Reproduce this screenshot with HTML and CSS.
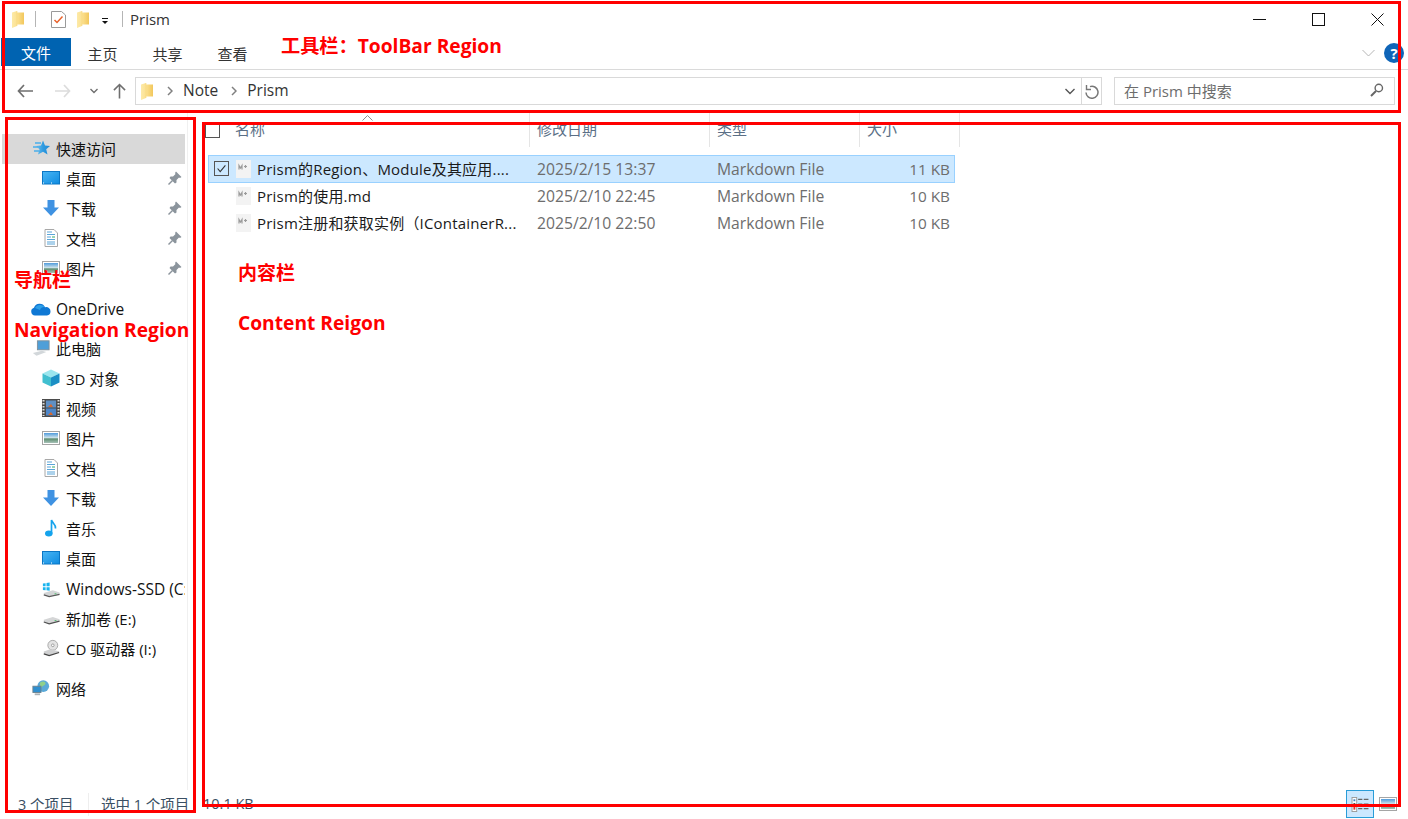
FILE: index.html
```html
<!DOCTYPE html>
<html lang="zh-CN">
<head>
<meta charset="utf-8">
<title>Prism</title>
<link rel="stylesheet" href="styles.css">
</head>
<body>
<svg class="defs" width="0" height="0" aria-hidden="true">
  <defs>
    <linearGradient id="gf" x1="0" y1="0" x2="1" y2="0"><stop offset="0" stop-color="#fdeaa8"/><stop offset=".45" stop-color="#fbe08f"/><stop offset="1" stop-color="#f2c75c"/></linearGradient>
    <linearGradient id="gd" x1="0" y1="0" x2="1" y2="1"><stop offset="0" stop-color="#49b6f5"/><stop offset="1" stop-color="#0f8be0"/></linearGradient>
    <linearGradient id="gp" x1="0" y1="0" x2="0" y2="1"><stop offset="0" stop-color="#4f9bdc"/><stop offset=".45" stop-color="#c8dfe9"/><stop offset=".6" stop-color="#5f8f72"/><stop offset="1" stop-color="#a8c2b8"/></linearGradient>
    <linearGradient id="gs" x1="0" y1="0" x2="1" y2="0"><stop offset="0" stop-color="#6cc0f0"/><stop offset=".5" stop-color="#2f9be0"/><stop offset="1" stop-color="#1f8ad6"/></linearGradient>
    <symbol id="i-folder" viewBox="0 0 12 17"><path d="M0 1.500 5 0V1.500H12V13.500H5V15L0 17Z" fill="url(#gf)"/><path d="M5 0V15" stroke="#f7d67c" stroke-width=".6"/></symbol>
    <symbol id="i-desktop" viewBox="0 0 18 14"><rect x=".5" y=".5" width="17" height="12.500" fill="url(#gd)" stroke="#0b76c4"/><path d="M1 12h16" stroke="#fff" stroke-dasharray="1 7"/></symbol>
    <symbol id="i-down" viewBox="0 0 18 18"><path d="M5.500 1h7v7.500H17L9 17 1 8.500h4.500Z" fill="#3f92e2"/></symbol>
    <symbol id="i-doc" viewBox="0 0 18 18"><path d="M3 .5h9L15.500 4v13.500H3Z" fill="#fff" stroke="#a8a8a8"/><path d="M5 3h5M5 5.500h8M5 8h4M5 10.500h8M5 13h8M5 15h8" stroke="#5aa5d8"/><path d="M10 8h3" stroke="#3a6"/></symbol>
    <symbol id="i-pic" viewBox="0 0 18 14"><rect x=".5" y=".5" width="17" height="13" fill="#fff" stroke="#a5a5a5"/><rect x="2" y="2" width="14" height="10" fill="url(#gp)"/></symbol>
    <symbol id="i-pin" viewBox="0 0 14 14"><path d="M8 .5 13.500 6 12 7 11 6.500 8.500 9 8.500 11.500 7 12.500 1.500 7 2.500 5.500 5 5.500 7.500 3 7 2Z" fill="#8b949c"/><path d="M4.500 9.500 .5 13.500" stroke="#8b949c" stroke-width="1.400"/></symbol>
    <symbol id="i-md" viewBox="0 0 15 18"><rect x="0" y="0" width="15" height="18" fill="#f3f3f3"/><path d="M3 9.500V5.500l1.500 2.500L6 5.500v4M8 6.500h3M9.500 5v3" fill="none" stroke="#9b9b9b" stroke-width="1.200"/></symbol>
    <symbol id="i-check" viewBox="0 0 15 15"><path d="M3 7.500 6 11 12 4" fill="none" stroke="#333" stroke-width="1.300"/></symbol>
    <symbol id="i-crumb" viewBox="0 0 6 10"><path d="M1 1 5 5 1 9" fill="none" stroke="#808080" stroke-width="1.500"/></symbol>
  </defs>
</svg>

<div class="window">
  <header class="toolbar">
    <div class="titlebar">
      <svg class="q-folder"><use href="#i-folder"/></svg>
      <span class="q-sep"></span>
      <svg class="q-props" viewBox="0 0 15 17"><path d="M.5.500h10L14.500 4v12.500H.5Z" fill="#fff" stroke="#9a9a9a"/><path d="M3.500 9 6 11.500 11.500 5.500" fill="none" stroke="#e8622c" stroke-width="1.500"/></svg>
      <svg class="q-folder q-folder2"><use href="#i-folder"/></svg>
      <svg class="q-drop" viewBox="0 0 8 8"><path d="M1 1.500h6" stroke="#111"/><path d="M1 4h6L4 7Z" fill="#111"/></svg>
      <span class="q-sep q-sep2"></span>
      <span class="title-text">Prism</span>
      <div class="win-btns">
        <button class="win-btn"><svg viewBox="0 0 13 13"><path d="M0 6.500h13" stroke="#111"/></svg></button>
        <button class="win-btn"><svg viewBox="0 0 13 13"><rect x=".5" y=".5" width="12" height="12" fill="none" stroke="#111"/></svg></button>
        <button class="win-btn"><svg viewBox="0 0 13 13"><path d="M.5.500l12 12M12.500.500l-12 12" stroke="#111"/></svg></button>
      </div>
    </div>
    <div class="ribbon">
      <span class="tab tab-file">文件</span>
      <span class="tab">主页</span>
      <span class="tab">共享</span>
      <span class="tab">查看</span>
      <svg class="rib-chev" viewBox="0 0 13 8"><path d="M.5 1 6.500 7 12.500 1" fill="none" stroke="#b5b5b5"/></svg>
      <span class="help">?</span>
    </div>
    <div class="addr-row">
      <div class="nav-arrows">
        <svg class="ar-back" viewBox="0 0 16 14"><path d="M7 1 1.500 7 7 13M1.500 7H16" fill="none" stroke="#6f6f6f" stroke-width="1.700"/></svg>
        <svg class="ar-fwd" viewBox="0 0 16 14"><path d="M9 1 14.500 7 9 13M14.500 7H0" fill="none" stroke="#dcdcdc" stroke-width="1.700"/></svg>
        <svg class="ar-rec" viewBox="0 0 8 6"><path d="M.5 1 4 4.500 7.500 1" fill="none" stroke="#6f6f6f" stroke-width="1.400"/></svg>
        <svg class="ar-up" viewBox="0 0 14 16"><path d="M1 7 7 1 13 7M7 1V16" fill="none" stroke="#6f6f6f" stroke-width="1.700"/></svg>
      </div>
      <div class="addr">
        <svg class="addr-folder"><use href="#i-folder"/></svg>
        <svg class="crumb-sep"><use href="#i-crumb"/></svg>
        <span class="crumb crumb-note">Note</span>
        <svg class="crumb-sep crumb-sep2"><use href="#i-crumb"/></svg>
        <span class="crumb">Prism</span>
        <svg class="addr-chev" viewBox="0 0 10 7"><path d="M.5 1 5 5.500 9.500 1" fill="none" stroke="#555" stroke-width="1.400"/></svg>
        <span class="addr-refresh"><svg viewBox="0 0 14 15"><path d="M5 2.600A6 6 0 1 1 1 8.500" fill="none" stroke="#777" stroke-width="1.500"/><path d="M1.500 1V5.500H6" fill="none" stroke="#777" stroke-width="1.400"/></svg></span>
      </div>
      <div class="search">
        <span>在 Prism 中搜索</span>
        <svg viewBox="0 0 14 14"><circle cx="8.800" cy="5" r="3.700" fill="none" stroke="#666" stroke-width="1.400"/><path d="M6 8 1 13" stroke="#666" stroke-width="2"/></svg>
      </div>
    </div>
  </header>

  <div class="main">
    <nav class="nav">
      <div class="nav-row l1 active">
        <svg class="ni" viewBox="0 0 18 16"><path d="M11 .5 13 5.500 18 6 14.200 9.300 15.500 14.500 11 11.800 6 14.500 7.500 9.300 4 6 9 5.500Z" fill="url(#gs)"/><path d="M3 3h6M1 7h5M2 11h5" stroke="#4aaeea" stroke-width="1.300"/></svg>
        <span>快速访问</span>
      </div>
      <div class="nav-row l2"><svg class="ni"><use href="#i-desktop"/></svg><span>桌面</span><svg class="pin"><use href="#i-pin"/></svg></div>
      <div class="nav-row l2"><svg class="ni"><use href="#i-down"/></svg><span>下载</span><svg class="pin"><use href="#i-pin"/></svg></div>
      <div class="nav-row l2"><svg class="ni"><use href="#i-doc"/></svg><span>文档</span><svg class="pin"><use href="#i-pin"/></svg></div>
      <div class="nav-row l2"><svg class="ni"><use href="#i-pic"/></svg><span>图片</span><svg class="pin"><use href="#i-pin"/></svg></div>
      <div class="nav-row l1 gap latin">
        <svg class="ni ni-wide" viewBox="0 0 21 13"><path d="M5 12.500a4 4 0 0 1-1-7.800A6 6 0 0 1 15 4.200 4.200 4.200 0 0 1 20.500 8.500 4 4 0 0 1 17 12.500Z" fill="#0f78d4"/><path d="M5 5a6 6 0 0 1 10-.8A4 4 0 0 0 10 7Z" fill="#2d9fe8"/></svg>
        <span>OneDrive</span>
      </div>
      <div class="nav-row l1 gap">
        <svg class="ni" viewBox="0 0 20 18"><rect x="6" y="1" width="13" height="10" fill="#4f9fd8" stroke="#7f8e99"/><path d="M1 14.500 11 12 16 13.500 5 17.500Z" fill="#d2d7da"/></svg>
        <span>此电脑</span>
      </div>
      <div class="nav-row l2">
        <svg class="ni" viewBox="0 0 18 18"><path d="M9 .5 17.500 4.500 9 8.500.5 4.500Z" fill="#9be6ee"/><path d="M.5 4.500 9 8.500V17.500L.5 13.500Z" fill="#41bfd0"/><path d="M17.500 4.500 9 8.500V17.500L17.500 13.500Z" fill="#1b8fc5"/></svg>
        <span>3D 对象</span>
      </div>
      <div class="nav-row l2">
        <svg class="ni" viewBox="0 0 18 18"><rect width="18" height="18" fill="#4b4b4b"/><path d="M1.500 1v16M16.500 1v16" stroke="#ddd" stroke-dasharray="1.500 1.500" stroke-width="2"/><rect x="4" y="1.500" width="10" height="7" fill="#5f8fc4"/><rect x="4" y="9.500" width="10" height="7" fill="#4d86c9"/><path d="M6 8h5l-2-3ZM6 16h5l-2-3Z" fill="#d9682d"/></svg>
        <span>视频</span>
      </div>
      <div class="nav-row l2"><svg class="ni"><use href="#i-pic"/></svg><span>图片</span></div>
      <div class="nav-row l2"><svg class="ni"><use href="#i-doc"/></svg><span>文档</span></div>
      <div class="nav-row l2"><svg class="ni"><use href="#i-down"/></svg><span>下载</span></div>
      <div class="nav-row l2">
        <svg class="ni" viewBox="0 0 18 18"><ellipse cx="6.800" cy="14.500" rx="3.800" ry="3" fill="#15a3ec"/><path d="M9.500 14.500V1c.4 2.500 4.500 4 4 8.500" fill="none" stroke="#15a3ec" stroke-width="1.700"/></svg>
        <span>音乐</span>
      </div>
      <div class="nav-row l2"><svg class="ni"><use href="#i-desktop"/></svg><span>桌面</span></div>
      <div class="nav-row l2 latin">
        <svg class="ni" viewBox="0 0 20 18"><path d="M1 3l3-.5V6H1ZM5 2.300 8.500 1.800V6H5ZM1 7h3v3.500L1 10ZM5 7h3.500v4L5 10.500Z" fill="#18b4ee"/><path d="M2 13.500 12 10.500 19.500 13 19.500 15 8 17.500 2 15.500Z" fill="#d2d4d5"/><path d="M2 15.500 8 17.500 19.500 15" fill="none" stroke="#5a5a5a" stroke-width="1.300"/><path d="M14 14.300h2" stroke="#4bbf6b"/></svg>
        <span>Windows-SSD (C:)</span>
      </div>
      <div class="nav-row l2">
        <svg class="ni" viewBox="0 0 20 18"><path d="M2 11 12 8 19.500 10.500 19.500 12.500 8 15.500 2 13.500Z" fill="#d5d6d7"/><path d="M2 13.500 8 15.500 19.500 12.500" fill="none" stroke="#4f4f4f" stroke-width="1.300"/><path d="M14 11.800h2" stroke="#4bbf6b"/></svg>
        <span>新加卷 (E:)</span>
      </div>
      <div class="nav-row l2">
        <svg class="ni" viewBox="0 0 20 18"><circle cx="12" cy="6" r="5.500" fill="#e3e3e3" stroke="#a5a5a5"/><circle cx="12" cy="6" r="1.500" fill="#fff" stroke="#999"/><path d="M2 13 9 10.500 19 12.500V14L8 17.500 2 15.500Z" fill="#cfd0d1"/><path d="M2 15.500 8 17.500 19 14" fill="none" stroke="#444" stroke-width="1.300"/></svg>
        <span>CD 驱动器 (I:)</span>
      </div>
      <div class="nav-row l1 gap">
        <svg class="ni" viewBox="0 0 20 18"><circle cx="12.500" cy="7" r="6.500" fill="#5aa9d8"/><path d="M9 3c3-2 6-1 6 1s-3 2-4 4-3-3-2-5Z" fill="#8fd08a"/><rect x="1" y="7" width="9" height="7" fill="#2f8fd0" stroke="#6d808c"/><path d="M3 16h6" stroke="#aab2b7" stroke-width="2"/></svg>
        <span>网络</span>
      </div>
    </nav>
    <div class="edge"></div>

    <section class="content">
      <div class="list-head">
        <span class="head-check"></span>
        <span class="hc hc-name">名称<svg class="sort" viewBox="0 0 11 6"><path d="M.5 5.500 5.500.5 10.500 5.500" fill="none" stroke="#8f8f8f"/></svg></span>
        <span class="hc hc-date">修改日期</span>
        <span class="hc hc-type">类型</span>
        <span class="hc hc-size">大小</span>
      </div>
      <div class="rows">
        <div class="row selected">
          <span class="row-check"><svg><use href="#i-check"/></svg></span>
          <svg class="file-icon"><use href="#i-md"/></svg>
          <span class="c-name">Prism的Region、Module及其应用....</span>
          <span class="c-date">2025/2/15 13:37</span>
          <span class="c-type">Markdown File</span>
          <span class="c-size">11 KB</span>
        </div>
        <div class="row">
          <span class="row-check none"></span>
          <svg class="file-icon"><use href="#i-md"/></svg>
          <span class="c-name">Prism的使用.md</span>
          <span class="c-date">2025/2/10 22:45</span>
          <span class="c-type">Markdown File</span>
          <span class="c-size">10 KB</span>
        </div>
        <div class="row">
          <span class="row-check none"></span>
          <svg class="file-icon"><use href="#i-md"/></svg>
          <span class="c-name">Prism注册和获取实例（IContainerR...</span>
          <span class="c-date">2025/2/10 22:50</span>
          <span class="c-type">Markdown File</span>
          <span class="c-size">10 KB</span>
        </div>
      </div>
    </section>
  </div>

  <footer class="status">
    <span class="st st1">3 个项目</span>
    <span class="st st2">选中 1 个项目</span>
    <span class="st st3">10.1 KB</span>
    <div class="views">
      <span class="view view-on"><svg viewBox="0 0 18 16"><rect x=".5" y=".5" width="5" height="15" fill="#fff" stroke="#999"/><rect x="2" y="2.500" width="2" height="2" fill="#3b7fc4"/><rect x="2" y="6.500" width="2" height="2" fill="#444"/><rect x="2" y="10.500" width="2" height="3" fill="#d33"/><path d="M7 2.500h4.500M13 2.500h5M7 7.500h4.500M13 7.500h5M7 12.500h4.500M13 12.500h5" stroke="#666" stroke-width="1.300"/></svg></span>
      <span class="view"><svg><use href="#i-pic"/></svg></span>
    </div>
  </footer>
</div>

<div class="note box-toolbar"></div>
<div class="note box-nav"></div>
<div class="note box-content"></div>
<div class="label lb-toolbar">工具栏：ToolBar Region</div>
<div class="label lb-nav-cn">导航栏</div>
<div class="label lb-nav-en">Navigation Region</div>
<div class="label lb-content-cn">内容栏</div>
<div class="label lb-content-en">Content Reigon</div>
</body>
</html>
```
FILE: styles.css
```css
* { box-sizing: border-box; }
html, body { margin: 0; padding: 0; height: 100%; background: #fff; overflow: hidden; }
body {
  position: relative;
  font-family: "Open Sans", "Noto Sans CJK SC", sans-serif;
  font-size: 15px;
  color: #1a1a1a;
}
.defs { position: absolute; }
svg { display: block; flex: none; }

.window { width: 1408px; height: 819px; display: flex; flex-direction: column; }

/* toolbar */
.toolbar { height: 113px; flex: none; display: flex; flex-direction: column; }
.titlebar { height: 38px; flex: none; display: flex; align-items: center; padding-left: 12px; }
.q-folder { width: 12px; height: 17px; }
.q-sep { width: 1px; height: 16px; background: #b5b5b5; margin-left: 11px; }
.q-props { width: 15px; height: 17px; margin-left: 15px; }
.q-folder2 { margin-left: 11px; }
.q-drop { width: 8px; height: 8px; margin-left: 12px; margin-top: 3px; }
.q-sep2 { margin-left: 13px; }
.title-text { margin-left: 7px; font-size: 15px; color: #333; padding-bottom: 1px; }
.win-btns { margin-left: auto; display: flex; margin-right: 1px; }
.win-btn { width: 59px; height: 30px; border: 0; background: none; padding: 0; display: flex; align-items: center; justify-content: center; }
.win-btn svg { width: 13px; height: 13px; }

.ribbon { height: 32px; flex: none; display: flex; align-items: flex-start; padding-left: 1px; border-bottom: 1px solid #dadada; position: relative; }
.tab { width: 65px; height: 28px; display: flex; align-items: center; justify-content: center; font-size: 15px; color: #333; padding: 2px 2px 0 0; }
.tab-file { width: 70px; background: #0063b1; color: #fff; padding: 0; }
.rib-chev { width: 13px; height: 8px; position: absolute; left: 1362px; top: 11px; }
.help { position: absolute; left: 1384px; top: 5px; width: 20px; height: 20px; border-radius: 50%; background: #0f65b8; color: #fff; font-weight: 700; font-size: 15px; display: flex; align-items: center; justify-content: center; line-height: 1; }

.addr-row { flex: 1; display: flex; align-items: flex-start; padding-top: 7px; }
.nav-arrows { width: 135px; height: 28px; display: flex; align-items: center; flex: none; padding-left: 17px; }
.ar-back { width: 16px; height: 14px; }
.ar-fwd { width: 16px; height: 14px; margin-left: 22px; }
.ar-rec { width: 8px; height: 6px; margin-left: 19px; }
.ar-up { width: 13px; height: 16px; margin-left: 15px; }
.addr { width: 967px; height: 28px; border: 1px solid #d9d9d9; display: flex; align-items: center; padding-left: 5px; flex: none; }
.addr-folder { width: 12px; height: 17px; }
.crumb-sep { width: 6px; height: 10px; margin-left: 14px; }
.crumb-sep2 { margin-left: 13px; }
.crumb { margin-left: 10px; color: #333; font-size: 15.500px; padding-bottom: 2px; }
.addr-chev { width: 10px; height: 7px; margin-left: auto; }
.addr-refresh { width: 20px; height: 26px; border-left: 1px solid #d9d9d9; margin-left: 6px; display: flex; align-items: center; justify-content: center; }
.addr-refresh svg { width: 14px; height: 15px; }
.search { width: 281px; height: 28px; border: 1px solid #d9d9d9; margin-left: 12px; display: flex; align-items: center; justify-content: space-between; padding: 0 10px 2px 9px; color: #6d6d6d; flex: none; }
.search svg { width: 14px; height: 14px; }

/* main */
.main { flex: 1; min-height: 0; display: flex; }
.nav { width: 185px; flex: none; padding-top: 21px; overflow: hidden; }
.edge { width: 1px; background: #f0f0f0; margin-left: 2px; flex: none; }
.nav-row { height: 30px; display: flex; align-items: center; white-space: nowrap; color: #111; margin-left: 2px; position: relative; padding-bottom: 2px; }
.nav-row.l1 { padding-left: 30px; }
.nav-row.l2 { padding-left: 40px; }
.nav-row.gap { margin-top: 10px; }
.nav-row.active { background: #d9d9d9; }
.nav-row.latin { font-size: 15.500px; padding-bottom: 0; }
.ni { width: 18px; height: 18px; margin-right: 6px; }
.ni-wide { width: 21px; height: 13px; margin-left: -2px; margin-right: 5px; }
.pin { width: 14px; height: 14px; position: absolute; left: 166px; top: 7px; }

.content { flex: 1; min-width: 0; padding-left: 17px; }
.list-head { height: 34px; position: relative; display: flex; }
.head-check { width: 15px; height: 16px; border: 1px solid #555; margin-top: 9px; flex: none; }
.hc { height: 34px; display: flex; align-items: center; padding: 0 0 3px 7px; border-right: 1px solid #e5e5e5; color: #5b6f86; flex: none; position: relative; }
.hc-name { width: 302px; margin-left: 8px; }
.hc-date { width: 180px; }
.hc-type { width: 150px; }
.hc-size { width: 100px; }
.sort { width: 11px; height: 6px; position: absolute; left: 134px; top: 2px; }
.rows { margin-top: 8px; margin-left: 3px; width: 747px; }
.row { height: 27px; display: flex; align-items: center; border: 1px solid transparent; color: #6d6d6d; padding-bottom: 1px; }
.row.selected { background: #cce8ff; border-color: #99d1ff; height: 28px; }
.row-check { width: 15px; height: 15px; margin-left: 5px; border: 1px solid #555; flex: none; }
.row-check.none { border-color: transparent; }
.row-check svg { width: 13px; height: 13px; }
.file-icon { width: 15px; height: 18px; margin-left: 7px; margin-top: 0; }
.c-name { width: 280px; margin-left: 6px; color: #1a1a1a; white-space: nowrap; overflow: hidden; flex: none; letter-spacing: .2px; padding-bottom: 1px; }
.c-date { width: 180px; flex: none; font-size: 15.700px; }
.c-type { width: 150px; flex: none; font-size: 15.700px; }
.c-size { width: 83px; flex: none; text-align: right; font-size: 15.300px; }

.status { height: 29px; flex: none; display: flex; align-items: center; font-size: 14.500px; color: #3a4f63; }
.st { padding-bottom: 2px; }
.st1 { margin-left: 18px; width: 71px; border-right: 1px solid #eee; }
.st2 { width: 114px; padding-left: 12px; }
.views { margin-left: auto; margin-right: 6px; display: flex; align-items: center; align-self: flex-start; }
.view { width: 28px; height: 28px; display: flex; align-items: center; justify-content: center; }
.view svg { width: 18px; height: 14px; }
.view-on { background: #cce8ff; border: 1px solid #2a9dd8; }
.view-on svg { height: 15px; }

/* annotations drawn over the screenshot */
.note { position: absolute; border: 3px solid #f00; pointer-events: none; }
.box-toolbar { left: 2px; top: 1px; width: 1399px; height: 112px; }
.box-nav { left: 5px; top: 117px; width: 191px; height: 696px; }
.box-content { left: 202px; top: 122px; width: 1199px; height: 685px; }
.label { position: absolute; color: #f00; font-weight: 700; font-size: 19.200px; line-height: 28px; white-space: nowrap; }
.lb-toolbar { left: 281px; top: 32px; }
.lb-nav-cn { left: 14px; top: 266px; font-size: 19px; }
.lb-nav-en { left: 14px; top: 316px; }
.lb-content-cn { left: 238px; top: 259px; font-size: 19px; }
.lb-content-en { left: 238px; top: 309px; }
```
